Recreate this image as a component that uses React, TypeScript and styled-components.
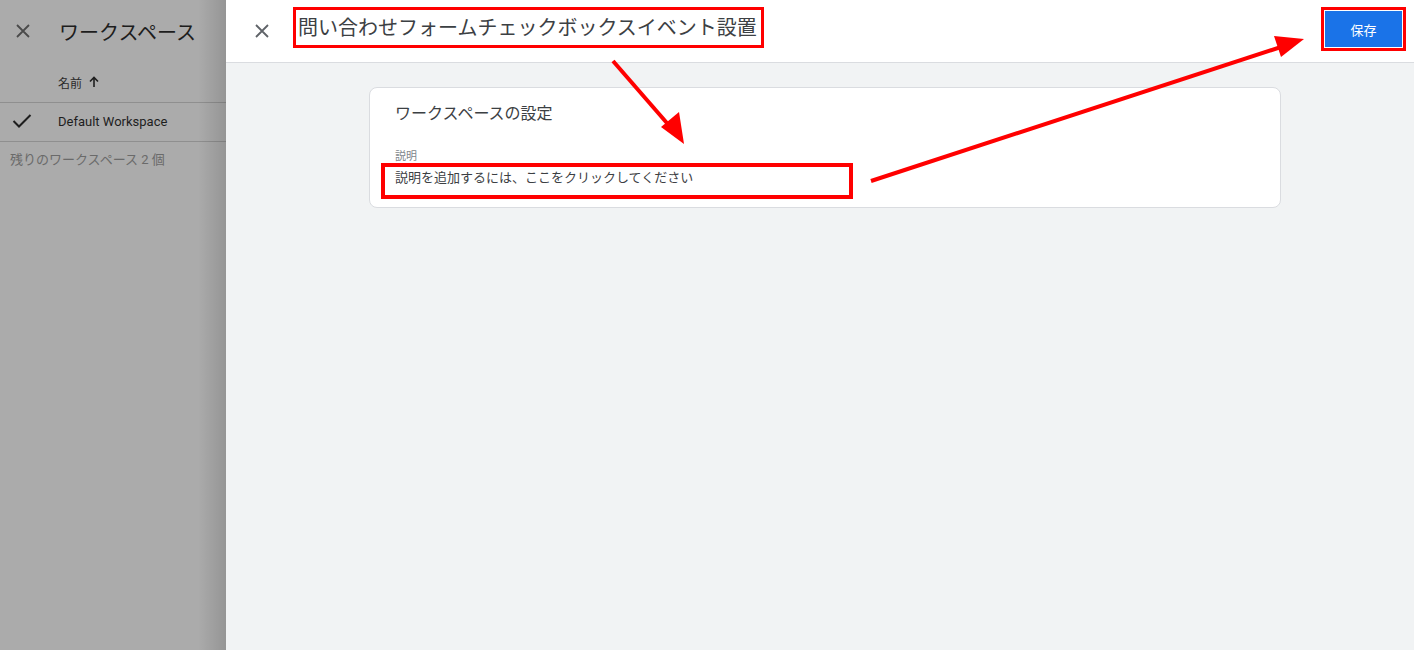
import React from 'react';
import styled, { createGlobalStyle } from 'styled-components';

const GlobalStyle = createGlobalStyle`
  html, body { margin: 0; padding: 0; }
  body {
    font-family: Roboto, "Noto Sans CJK JP", "Noto Sans", sans-serif;
    color: #202124;
    overflow: hidden;
  }
`;

const Page = styled.div`
  position: relative;
  width: 1414px;
  height: 650px;
  display: flex;
`;

// left panel, dimmed under the sheet
const SidePanel = styled.aside`
  position: relative;
  width: 226px;
  flex-shrink: 0;
  background: #ababab;
  color: #1e1e1e;

  &::after {
    content: '';
    position: absolute;
    top: 0;
    right: 0;
    bottom: 0;
    width: 28px;
    background: linear-gradient(to right, rgba(0, 0, 0, 0), rgba(0, 0, 0, 0.13));
  }
`;

const SideHeader = styled.div`
  height: 62px;
  display: flex;
  align-items: center;
  padding-left: 12px;
  gap: 25px;
  font-size: 20px;
  color: #1d1d1d;
`;

const IconButton = styled.button`
  width: 22px;
  height: 22px;
  padding: 0;
  border: none;
  background: none;
  display: flex;
  align-items: center;
  justify-content: center;
  cursor: pointer;
`;

const ColumnHead = styled.div`
  height: 40px;
  display: flex;
  align-items: center;
  gap: 6px;
  padding-left: 58px;
  font-size: 12px;
  color: #2a2a2a;
  border-bottom: 1px solid #8f8f8f;
`;

const WorkspaceRow = styled.div`
  height: 39px;
  display: flex;
  align-items: center;
  padding: 0 0 2px 12px;
  box-sizing: border-box;
  gap: 26px;
  font-size: 13px;
  color: #1e1e1e;
  border-bottom: 1px solid #8f8f8f;
`;

const Remaining = styled.div`
  padding: 7px 0 0 10px;
  font-size: 13px;
  color: #6a6a6a;
`;

const Sheet = styled.main`
  flex: 1;
  display: flex;
  flex-direction: column;
  background: #f1f3f4;
`;

const SheetHeader = styled.header`
  height: 62px;
  background: #fff;
  border-bottom: 1px solid #dadce0;
  display: flex;
  align-items: center;
  padding: 0 12px 0 25px;
  gap: 20px;
`;

const Title = styled.h1`
  margin: 0 0 7px 0;
  font-size: 20px;
  font-weight: 400;
  color: #3c4043;
  border: 3px solid #ff0000;
  padding: 2px 4px 0 2px;
  line-height: 33px;
`;

const SaveButton = styled.button`
  margin: 0 0 4px auto;
  width: 77px;
  height: 36px;
  border: none;
  border-radius: 0;
  background: #1a73e8;
  color: #fff;
  font-family: inherit;
  font-size: 13px;
  outline: 3px solid #ff0000;
  outline-offset: 1px;
`;

const Body = styled.div`
  display: flex;
  justify-content: center;
  padding: 24px 0 0 10px;
`;

const Card = styled.section`
  width: 912px;
  background: #fff;
  border: 1px solid #dadce0;
  border-radius: 8px;
  padding: 15px 24px 8px 11px;
  box-sizing: border-box;
`;

const CardTitle = styled.h2`
  margin: 0 0 0 14px;
  font-size: 16px;
  font-weight: 400;
  color: #3c4043;
  line-height: 22px;
`;

const FieldLabel = styled.div`
  margin: 22px 0 0 14px;
  font-size: 11px;
  color: #80868b;
`;

const FieldValue = styled.div`
  width: 472px;
  height: 36px;
  box-sizing: border-box;
  border: 4px solid #ff0000;
  padding: 0 0 9px 10px;
  display: flex;
  align-items: center;
  font-size: 13px;
  color: #3c4043;
`;

const Annotations = styled.svg`
  position: absolute;
  inset: 0;
  pointer-events: none;
`;

const CloseIcon = ({ color }: { color: string }) => (
  <svg width="14" height="14" viewBox="0 0 14 14">
    <path d="M1 1 L13 13 M13 1 L1 13" stroke={color} strokeWidth="1.8" fill="none" />
  </svg>
);

const App: React.FC = () => (
  <Page>
    <GlobalStyle />
    <SidePanel>
      <SideHeader>
        <IconButton>
          <CloseIcon color="#4a4a4a" />
        </IconButton>
        <span>ワークスペース</span>
      </SideHeader>
      <ColumnHead>
        <span>名前</span>
        <svg width="12" height="12" viewBox="0 0 12 12">
          <path d="M6 11 V2 M2 5.5 L6 1.5 L10 5.5" stroke="#1e1e1e" strokeWidth="1.6" fill="none" />
        </svg>
      </ColumnHead>
      <WorkspaceRow>
        <svg width="20" height="16" viewBox="0 0 20 16">
          <path d="M1.5 8 L7 13.5 L18.5 2" stroke="#1e1e1e" strokeWidth="2" fill="none" />
        </svg>
        <span>Default Workspace</span>
      </WorkspaceRow>
      <Remaining>残りのワークスペース 2 個</Remaining>
    </SidePanel>

    <Sheet>
      <SheetHeader>
        <IconButton>
          <CloseIcon color="#5f6368" />
        </IconButton>
        <Title>問い合わせフォームチェックボックスイベント設置</Title>
        <SaveButton>保存</SaveButton>
      </SheetHeader>
      <Body>
        <Card>
          <CardTitle>ワークスペースの設定</CardTitle>
          <FieldLabel>説明</FieldLabel>
          <FieldValue>説明を追加するには、ここをクリックしてください</FieldValue>
        </Card>
      </Body>
    </Sheet>

    <Annotations width="1414" height="650" viewBox="0 0 1414 650">
      <line x1="613" y1="61" x2="673" y2="130" stroke="#ff0000" strokeWidth="4" />
      <polygon points="684,144 661,127 679,112" fill="#ff0000" />
      <line x1="871" y1="181" x2="1284" y2="46" stroke="#ff0000" strokeWidth="4" />
      <polygon points="1304,39 1281,57 1274,36" fill="#ff0000" />
    </Annotations>
  </Page>
);

export default App;
